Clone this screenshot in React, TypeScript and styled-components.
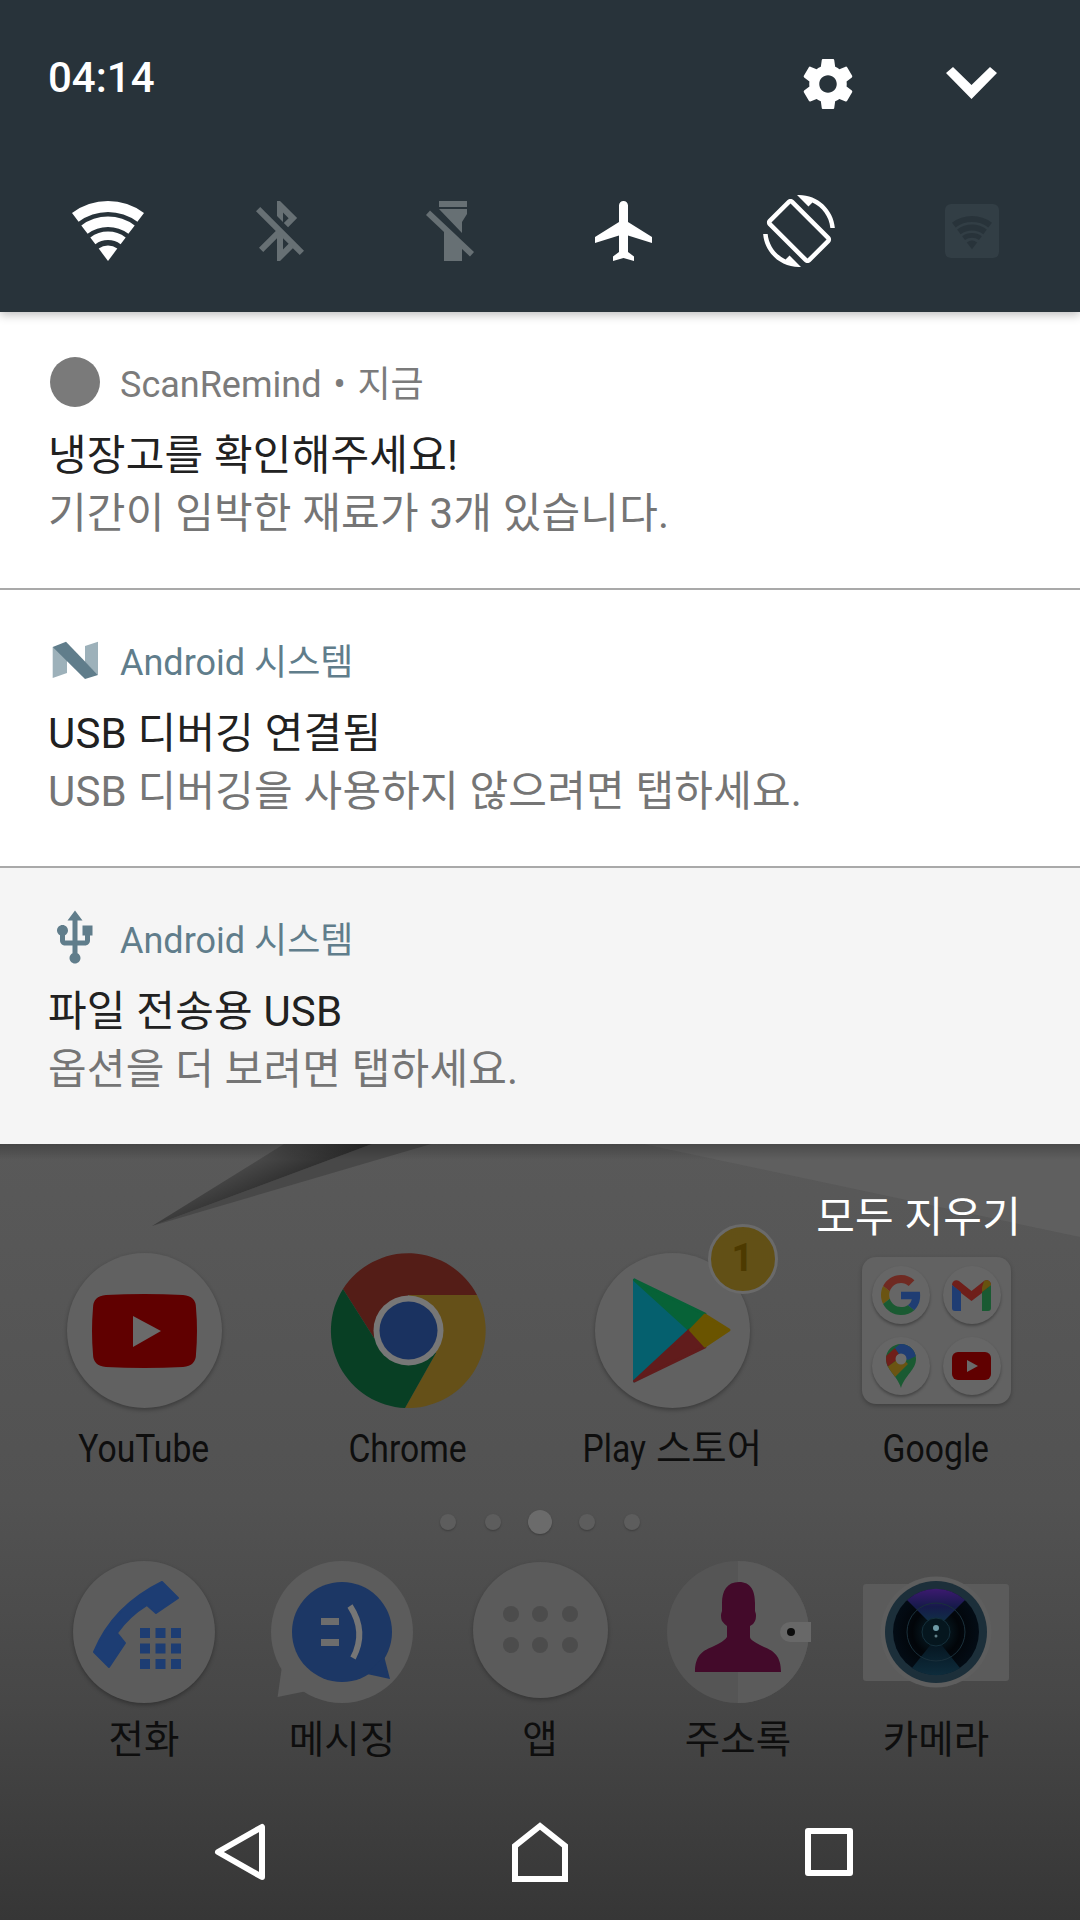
import styled, { createGlobalStyle } from "styled-components";

const GlobalStyle = createGlobalStyle`
    html, body {
        margin: 0;
        padding: 0;
        background: #363636;
    }
    * {
        box-sizing: border-box;
    }
    body {
        font-family: Roboto, "Noto Sans CJK KR", sans-serif;
    }
`

const Screen = styled.div`
    width: 1080px;
    height: 1920px;
    display: flex;
    flex-direction: column;
    overflow: hidden;
`

const Shade = styled.header`
    position: relative;
    z-index: 2;
    flex: 0 0 312px;
    background: #28333a;
    box-shadow: 0 3px 9px rgba(0, 0, 0, 0.25);
`

const ShadeTop = styled.div`
    display: flex;
    align-items: flex-start;
    height: 195px;
    padding: 54px 83px 0 48px;
`

const Clock = styled.div`
    margin-top: -1px;
    font-size: 42px;
    line-height: 49px;
    font-weight: 500;
    color: #fff;
`

const GearSlot = styled.svg`
    display: block;
    margin-left: auto;
`

const ChevronSlot = styled.svg`
    display: block;
    margin: 13px 0 0 88px;
`

const Tiles = styled.div`
    display: grid;
    grid-template-columns: 172px 172px 168px 178px 174px 172px;
    align-items: center;
    justify-items: center;
    height: 72px;
    margin-left: 22px;
`

const Notification = styled.article<{ $muted?: boolean }>`
    flex: 0 0 276px;
    padding: 40px 0 0 48px;
    background: ${(props) => (props.$muted ? "#f5f5f5" : "#fff")};
`

const Rule = styled.div`
    flex: 0 0 2px;
    background: #a9a9a9;
`

const NotifHead = styled.div`
    display: flex;
    align-items: center;
    height: 60px;
    margin-left: -3px;
    gap: 15px;
`

const AppIcon = styled.svg`
    display: block;
    flex: 0 0 60px;
`

const AppName = styled.div<{ $tint?: boolean }>`
    margin-top: 5px;
    font-size: 36px;
    line-height: 60px;
    color: ${(props) => (props.$tint ? "#607d8b" : "#7b7b7b")};
`

const NameDot = styled.span`
    margin: 0 3px;
`

const NotifTitle = styled.div`
    margin-top: 14px;
    font-size: 42px;
    line-height: 60px;
    letter-spacing: 0.2px;
    color: #212121;
`

const NotifBody = styled.div`
    margin-top: -2px;
    font-size: 42px;
    line-height: 60px;
    letter-spacing: 0.2px;
    color: #757575;
`

const Wallpaper = styled.section`
    position: relative;
    flex: 1;
    display: flex;
    flex-direction: column;
    background: linear-gradient(180deg, #595959 0, #525252 356px, #474747 556px, #363636 776px);

    &::after {
        content: "";
        position: absolute;
        top: 0;
        left: 0;
        right: 0;
        height: 16px;
        background: linear-gradient(180deg, rgba(0, 0, 0, 0.22), rgba(0, 0, 0, 0));
    }
`

const WallpaperLight = styled.div`
    position: absolute;
    top: 0;
    left: 0;
    width: 1080px;
    height: 93px;
    background: #5f5f5f;
    clip-path: polygon(643px 0, 1080px 0, 1080px 93px);
`

const ShardCore = styled.div`
    position: absolute;
    top: 0;
    left: 0;
    width: 440px;
    height: 84px;
    background: linear-gradient(155deg, #4a4a4a 46%, #2f2f2f 59%);
    clip-path: polygon(284px 0, 372px 0, 152px 82px);
`

const ShardEdge = styled.div`
    position: absolute;
    top: 0;
    left: 0;
    width: 440px;
    height: 84px;
    background: #484848;
    clip-path: polygon(372px 0, 431px 0, 152px 82px);
`

const ClearRow = styled.div`
    position: relative;
    z-index: 1;
    height: 109px;
    padding: 50px 59px 0 0;
    text-align: right;
    font-size: 42px;
    line-height: 48px;
    letter-spacing: 0.2px;
    color: #fff;
`

const AppGrid = styled.div`
    position: relative;
    z-index: 1;
    display: grid;
    grid-template-columns: repeat(4, 264px);
    margin-left: 12px;
`

const DockGrid = styled.div`
    position: relative;
    z-index: 1;
    display: grid;
    grid-template-columns: repeat(5, 198px);
    margin: 27px 0 0 45px;
`

const Launcher = styled.div`
    display: flex;
    flex-direction: column;
    align-items: center;
`

const LauncherIcon = styled.div<{ $size: number }>`
    position: relative;
    display: flex;
    align-items: center;
    justify-content: center;
    width: ${(props) => props.$size}px;
    height: ${(props) => props.$size}px;
`

const Disc = styled.div<{ $size: number; $dock?: boolean }>`
    display: flex;
    align-items: center;
    justify-content: center;
    width: ${(props) => props.$size}px;
    height: ${(props) => props.$size}px;
    border-radius: 50%;
    background: ${(props) => (props.$dock ? "#5c5c5c" : "#616161")};
    box-shadow: 0 2px 4px rgba(0, 0, 0, 0.3);
`

const IconArt = styled.svg`
    display: block;
    overflow: visible;
    flex: none;
`

const LauncherLabel = styled.div<{ $dock?: boolean }>`
    margin-top: ${(props) => (props.$dock ? "15px" : "19px")};
    font-size: 38.5px;
    line-height: 44px;
    color: #0e0e0e;
    white-space: nowrap;
`

const Narrow = styled.span`
    display: inline-block;
    transform: scaleX(0.875);
    margin: 0 -4px;
`

const Badge = styled.div`
    position: absolute;
    top: -29px;
    right: -28px;
    width: 70px;
    height: 70px;
    border-radius: 50%;
    border: 3px solid #6a6a6a;
    background: #625016;
    color: #4d3a00;
    font-size: 38px;
    font-weight: 700;
    line-height: 62px;
    text-align: center;
`

const Folder = styled.div`
    display: grid;
    grid-template-columns: 58px 58px;
    grid-auto-rows: 58px;
    gap: 13px;
    padding: 9px 10px;
    width: 149px;
    height: 147px;
    border-radius: 14px;
    background: #626262;
    box-shadow: 0 2px 4px rgba(0, 0, 0, 0.25);
`

const FolderDisc = styled.div`
    display: flex;
    align-items: center;
    justify-content: center;
    border-radius: 50%;
    background: #666;
    box-shadow: 0 2px 3px rgba(0, 0, 0, 0.3);
`

const Pager = styled.div`
    position: relative;
    z-index: 1;
    display: flex;
    align-items: center;
    justify-content: center;
    gap: 29px;
    height: 24px;
    margin-top: 39px;
`

const PagerDot = styled.div<{ $active?: boolean }>`
    width: ${(props) => (props.$active ? "24px" : "16px")};
    height: ${(props) => (props.$active ? "24px" : "16px")};
    margin: ${(props) => (props.$active ? "0 -2px" : "0")};
    border-radius: 50%;
    background: ${(props) => (props.$active ? "#6b6b6b" : "#5d5d5d")};
    box-shadow: 0 1px 2px rgba(0, 0, 0, 0.25);
`

const AppsDisc = styled.div`
    display: grid;
    grid-template-columns: repeat(3, 16px);
    grid-auto-rows: 16px;
    column-gap: 13.5px;
    row-gap: 15px;
    align-content: center;
    justify-content: center;
    width: 135px;
    height: 136px;
    margin-bottom: 5px;
    border-radius: 50%;
    background: #5b5b5b;
    box-shadow: 0 2px 4px rgba(0, 0, 0, 0.25);
`

const AppsDot = styled.div`
    border-radius: 50%;
    background: #4c4c4c;
`

const NavBar = styled.nav`
    position: relative;
    z-index: 1;
    display: grid;
    grid-template-columns: 240px 300px 289px;
    justify-items: end;
    align-items: center;
    height: 60px;
    margin-top: 60px;
`

const NavIcon = styled.svg<{ $shift: number }>`
    display: block;
    overflow: visible;
    margin-right: ${(props) => props.$shift}px;
`

function fan(inner: number, outer: number) {
    const pt = (r: number, side: number) => `${(36 + side * r * 0.6).toFixed(2)} ${(60 - r * 0.8).toFixed(2)}`
    if (inner === 0) return `M36 60L${pt(outer, -1)}A${outer} ${outer} 0 0 1 ${pt(outer, 1)}Z`
    return `M${pt(inner, -1)}L${pt(outer, -1)}A${outer} ${outer} 0 0 1 ${pt(outer, 1)}L${pt(inner, 1)}A${inner} ${inner} 0 0 0 ${pt(inner, -1)}Z`
}

const wifiBands = [fan(49, 60), fan(34, 44.5), fan(21, 29.5), fan(0, 15.5)]

function WifiIcon() {
    return (
        <IconArt width={72} height={60} viewBox="0 0 72 60">
            {wifiBands.map((d) => <path key={d} d={d} fill="#fff" />)}
        </IconArt>
    )
}

function BluetoothOffIcon() {
    return (
        <IconArt width={48} height={60} viewBox="4 2 16 20">
            <path fill="#677074" d="M13 5.83l1.88 1.88-1.6 1.6 1.41 1.41 3.02-3.02L12 2h-1v5.03l2 2v-3.2zM5.41 4L4 5.41 10.59 12 5 17.59 6.41 19 11 14.41V22h1l4.29-4.29 2.3 2.29L20 18.59 5.41 4zM13 18.17v-3.76l1.88 1.88L13 18.17z" />
        </IconArt>
    )
}

function FlashOffIcon() {
    return (
        <IconArt width={48} height={60} viewBox="0 0 48 60">
            <g fill="#677074">
                <rect x="13" y="0" width="28" height="6" />
                <polygon points="13,8 41,8 41,13 36,21 36,32" />
                <polygon points="18,27 36,44 36,60 18,60" />
                <polygon points="0,14 4,9.5 48,51 44,55.5" />
            </g>
        </IconArt>
    )
}

function PlaneIcon() {
    return (
        <IconArt width={57} height={60} viewBox="2 2 19 20">
            <path fill="#fff" d="M21 16v-2l-8-5V3.5c0-.83-.67-1.5-1.5-1.5S10 2.67 10 3.5V9l-8 5v2l8-2.5V19l-2 1.5V22l3.5-1 3.5 1v-1.5L13 19v-5.5l8 2.5z" />
        </IconArt>
    )
}

function RotateIcon() {
    return (
        <IconArt width={72} height={72} viewBox="0 0 24 24">
            <path fill="#fff" d="M16.48 2.52c3.27 1.55 5.61 4.72 5.97 8.48h1.5C23.44 4.84 18.29 0 12 0l-.66.03 3.81 3.81 1.33-1.32zm-6.25-.77c-.59-.59-1.54-.59-2.12 0L1.75 8.11c-.59.59-.59 1.54 0 2.12l12.02 12.02c.59.59 1.54.59 2.12 0l6.36-6.36c.59-.59.59-1.54 0-2.12L10.23 1.75zm4.6 19.44L2.81 9.17l6.36-6.36 12.02 12.02-6.36 6.36zm-7.31.29C4.25 19.94 1.91 16.76 1.55 13H.05C.56 19.16 5.71 24 12 24l.66-.03-3.81-3.81-1.33 1.32z" />
        </IconArt>
    )
}

function DataIcon() {
    return (
        <IconArt width={54} height={54} viewBox="0 0 54 54">
            <rect width="54" height="54" rx="6" fill="#323e45" />
            <g transform="translate(7 12) scale(0.555)">
                {wifiBands.map((d) => <path key={d} d={d} fill="#28333a" />)}
            </g>
        </IconArt>
    )
}

function NougatIcon() {
    return (
        <AppIcon width={60} height={60} viewBox="0 0 60 60">
            <g transform="translate(7 11)">
                <polygon points="0.7,6 15,12 15,32 0.7,37" fill="#9db1ba" />
                <polygon points="46,0.7 33,5 33,21 46,34" fill="#9db1ba" />
                <polygon points="0.7,6 14,0.7 46,34 33,38" fill="#607d8b" />
            </g>
        </AppIcon>
    )
}

function UsbIcon() {
    return (
        <AppIcon width={60} height={60} viewBox="0 0 24 24">
            <path fill="#607d8b" d="M15 7v4h1v2h-3V5h2l-3-4-3 4h2v8H8v-2.07c.7-.37 1.2-1.08 1.2-1.93 0-1.21-.99-2.2-2.2-2.2-1.21 0-2.2.99-2.2 2.2 0 .85.5 1.56 1.2 1.93V13c0 1.11.89 2 2 2h3v3.05c-.71.37-1.2 1.1-1.2 1.95 0 1.22.99 2.2 2.2 2.2 1.21 0 2.2-.98 2.2-2.2 0-.85-.49-1.58-1.2-1.95V15h3c1.11 0 2-.89 2-2v-2h1V7h-4z" />
        </AppIcon>
    )
}

function YoutubeArt() {
    return (
        <IconArt width={105} height={74} viewBox="0 0 105 74">
            <path d="M14 1Q52 -1 91 1Q104 2 104 14Q106 37 104 60Q104 72 91 73Q52 75 14 73Q1 72 1 60Q-1 37 1 14Q1 2 14 1Z" fill="#600000" />
            <polygon points="41,22 41,53 69,37" fill="#6a6a6a" />
        </IconArt>
    )
}

function ChromeArt() {
    return (
        <IconArt width={155} height={155} viewBox="0 0 155 155">
            <path d="M12 36A77.5 77.5 0 0 1 146 42H77.5L43 85Z" fill="#541d17" />
            <path d="M146 42A77.5 77.5 0 0 1 74 155L105 100L77.5 42Z" fill="#655018" />
            <path d="M74 155A77.5 77.5 0 0 1 12 36L43 85L105 100Z" fill="#083f24" />
            <circle cx="77.5" cy="77.5" r="35" fill="#777" />
            <circle cx="77.5" cy="77.5" r="29" fill="#1a3260" />
        </IconArt>
    )
}

function PlayArt() {
    return (
        <IconArt width={155} height={155} viewBox="0 0 155 155">
            <g strokeWidth="3" strokeLinejoin="round">
                <polygon points="39.5,27 94.5,77 39.5,128" fill="#05606e" stroke="#05606e" />
                <polygon points="39.5,27 110,61 94.5,77" fill="#076237" stroke="#076237" />
                <polygon points="39.5,128 94.5,77 110,94" fill="#611c1c" stroke="#611c1c" />
                <polygon points="110,62 134,77 110,93 95.5,77" fill="#6a5400" stroke="#6a5400" />
            </g>
        </IconArt>
    )
}

function MiniGoogle() {
    return (
        <IconArt width={40} height={40} viewBox="0 0 48 48">
            <path fill="#6f2a22" d="M24 9.5c3.54 0 6.71 1.22 9.21 3.6l6.85-6.85C35.9 2.38 30.47 0 24 0 14.62 0 6.51 5.38 2.56 13.22l7.98 6.19C12.43 13.72 17.74 9.5 24 9.5z" />
            <path fill="#1f3d73" d="M46.98 24.55c0-1.57-.15-3.09-.38-4.55H24v9.02h12.94c-.58 2.96-2.26 5.48-4.78 7.18l7.73 6c4.51-4.18 7.09-10.36 7.09-17.65z" />
            <path fill="#6b5412" d="M10.53 28.59c-.48-1.45-.76-2.99-.76-4.59s.27-3.14.76-4.59l-7.98-6.19C.92 16.46 0 20.12 0 24c0 3.88.92 7.54 2.56 10.78l7.97-6.19z" />
            <path fill="#1a5a32" d="M24 48c6.48 0 11.93-2.13 15.89-5.81l-7.73-6c-2.15 1.45-4.92 2.3-8.16 2.3-6.26 0-11.57-4.22-13.47-9.91l-7.98 6.19C6.51 42.62 14.62 48 24 48z" />
        </IconArt>
    )
}

function MiniGmail() {
    return (
        <IconArt width={39} height={31} viewBox="0 0 39 31">
            <path d="M0 5C0 1 4 -1 7 1L19.5 11L32 1C35 -1 39 1 39 5L30 13L19.5 21L9 13Z" fill="#6f1f1a" />
            <path d="M0 5L9 12V31H3C1 31 0 30 0 28Z" fill="#1f3d73" />
            <path d="M39 5L30 12V31H36C38 31 39 30 39 28Z" fill="#1a5a32" />
            <path d="M30 7.5L32 1C35 -1 39 1 39 5L30 12Z" fill="#66520f" />
        </IconArt>
    )
}

function MiniMaps() {
    return (
        <IconArt width={30} height={44} viewBox="0 0 30 44">
            <defs>
                <clipPath id="pin">
                    <path d="M15 0C6.7 0 0 6.5 0 14.8C0 26 11 31 15 44C19 31 30 26 30 14.8C30 6.5 23.3 0 15 0Z" />
                </clipPath>
            </defs>
            <g clipPath="url(#pin)">
                <rect width="30" height="44" fill="#1a5a32" />
                <polygon points="0,12 9,4 15,13 0,24" fill="#6f1f1a" />
                <polygon points="0,24 15,13 22,20 6,36 0,30" fill="#6b5412" />
                <polygon points="9,4 14,0 30,0 30,12 22,16 15,13" fill="#1f3d73" />
            </g>
            <circle cx="15" cy="15" r="5.5" fill="#6c6c6c" />
        </IconArt>
    )
}

function MiniYoutube() {
    return (
        <IconArt width={39} height={28} viewBox="0 0 39 28">
            <rect width="39" height="28" rx="6" fill="#600000" />
            <polygon points="15,8 15,20 26,14" fill="#6a6a6a" />
        </IconArt>
    )
}

function PhoneArt() {
    return (
        <IconArt width={142} height={142} viewBox="0 0 142 142">
            <path d="M89 21L105 37L83 52L74 44Q56 55 44 72L52 82L36 106L21 91Q40 45 89 21Z" fill="#1d3d73" stroke="#1d3d73" strokeWidth="2" strokeLinejoin="round" />
            <g fill="#1d3d73">
                {[67, 82.5, 98].map((y) => [67, 82.5, 98].map((x) => <rect key={`${x}-${y}`} x={x} y={y} width="10" height="10" />))}
            </g>
        </IconArt>
    )
}

function MessagingArt() {
    return (
        <IconArt width={142} height={142} viewBox="0 0 142 142">
            <circle cx="71" cy="71" r="71" fill="#5c5c5c" />
            <polygon points="11,105 6.6,136 36,130" fill="#5c5c5c" />
            <circle cx="71" cy="71" r="50" fill="#1c3765" />
            <polygon points="113,95 119,118 96,113" fill="#1c3765" />
            <rect x="50" y="57" width="18" height="7" fill="#6d6d6d" />
            <rect x="50" y="78" width="18" height="7" fill="#6d6d6d" />
            <path d="M79 45Q96 71 82 97" fill="none" stroke="#767676" strokeWidth="6" />
        </IconArt>
    )
}

function ContactsArt() {
    return (
        <IconArt width={142} height={142} viewBox="0 0 142 142">
            <circle cx="71" cy="71" r="71" fill="#555" />
            <path d="M71 0A71 71 0 0 1 71 142Z" fill="#5b5b5b" />
            <path d="M72 21C60 21 55 30 55 42V50Q53 55 55 60Q58 64 60 65V76Q58 80 45 86C35 90 28 95 28 111H114C114 95 107 90 97 86C85 80 83 78 83 76V65Q87 63 88 60Q90 55 88 50V42C88 30 84 21 72 21Z" fill="#430a2a" />
            <path d="M123 61H144V81H123A10 10 0 0 1 123 61Z" fill="#686868" />
            <circle cx="124" cy="71" r="4" fill="#0c0c0c" />
        </IconArt>
    )
}

function CameraArt() {
    return (
        <IconArt width={148} height={112} viewBox="0 0 148 112">
            <defs>
                <radialGradient id="lens" cx="50%" cy="50%" r="50%">
                    <stop offset="0" stopColor="#0a2530" />
                    <stop offset="0.55" stopColor="#020509" />
                    <stop offset="1" stopColor="#030c15" />
                </radialGradient>
                <linearGradient id="wedgeTop" x1="0" y1="0" x2="0" y2="1">
                    <stop offset="0" stopColor="#3c1a70" />
                    <stop offset="0.45" stopColor="#161a4a" />
                    <stop offset="1" stopColor="#0d3a44" />
                </linearGradient>
                <linearGradient id="wedgeLow" x1="0" y1="0" x2="0" y2="1">
                    <stop offset="0" stopColor="#04121c" />
                    <stop offset="1" stopColor="#0e2c3c" />
                </linearGradient>
            </defs>
            <rect x="1" y="8" width="146" height="97" rx="3" fill="#5b5b5b" />
            <circle cx="74" cy="56" r="55.5" fill="#5e5e5e" />
            <circle cx="74" cy="56" r="51" fill="#1c2f3a" />
            <circle cx="74" cy="56" r="43" fill="url(#lens)" />
            <path d="M45 24A43 43 0 0 1 103 24L74 53Z" fill="url(#wedgeTop)" />
            <path d="M50 92A43 43 0 0 0 98 92L74 62Z" fill="url(#wedgeLow)" />
            <circle cx="74" cy="56" r="29" fill="none" stroke="#1a303b" strokeWidth="1" />
            <circle cx="74" cy="56" r="14" fill="#05161e" stroke="#15303c" strokeWidth="1" />
            <circle cx="74" cy="52" r="3" fill="#6d9aa6" />
            <circle cx="74" cy="60" r="1.5" fill="#5f7f88" />
        </IconArt>
    )
}

export default function App() {
    return (
        <Screen>
            <GlobalStyle />
            <Shade>
                <ShadeTop>
                    <Clock>04:14</Clock>
                    <GearSlot width={60} height={60} viewBox="0 0 24 24">
                        <path fill="#fff" d="M19.43 12.98c.04-.32.07-.64.07-.98s-.03-.66-.07-.98l2.11-1.65c.19-.15.24-.42.12-.64l-2-3.46c-.12-.22-.39-.3-.61-.22l-2.49 1c-.52-.4-1.08-.73-1.69-.98l-.38-2.65C14.46 2.18 14.25 2 14 2h-4c-.25 0-.46.18-.49.42l-.38 2.65c-.61.25-1.17.59-1.69.98l-2.49-1c-.23-.09-.49 0-.61.22l-2 3.46c-.13.22-.07.49.12.64l2.11 1.65c-.04.32-.07.65-.07.98s.03.66.07.98l-2.11 1.65c-.19.15-.24.42-.12.64l2 3.46c.12.22.39.3.61.22l2.49-1c.52.4 1.08.73 1.69.98l.38 2.65c.03.24.24.42.49.42h4c.25 0 .46-.18.49-.42l.38-2.65c.61-.25 1.17-.59 1.69-.98l2.49 1c.23.09.49 0 .61-.22l2-3.46c.12-.22.07-.49-.12-.64l-2.11-1.65zM12 15.5c-1.93 0-3.5-1.57-3.5-3.5s1.57-3.5 3.5-3.5 3.5 1.57 3.5 3.5-1.57 3.5-3.5 3.5z" />
                    </GearSlot>
                    <ChevronSlot width={51} height={32} viewBox="0 0 51 32">
                        <polygon fill="#fff" points="0,6 7,0 25.5,18 44,0 51,6 25.5,32" />
                    </ChevronSlot>
                </ShadeTop>
                <Tiles>
                    <WifiIcon />
                    <BluetoothOffIcon />
                    <FlashOffIcon />
                    <PlaneIcon />
                    <RotateIcon />
                    <DataIcon />
                </Tiles>
            </Shade>

            <Notification>
                <NotifHead>
                    <AppIcon width={60} height={60} viewBox="0 0 60 60">
                        <circle cx="30" cy="30" r="25" fill="#7a7a7a" />
                    </AppIcon>
                    <AppName>ScanRemind<NameDot> • </NameDot>지금</AppName>
                </NotifHead>
                <NotifTitle>냉장고를 확인해주세요!</NotifTitle>
                <NotifBody>기간이 임박한 재료가 3개 있습니다.</NotifBody>
            </Notification>
            <Rule />
            <Notification>
                <NotifHead>
                    <NougatIcon />
                    <AppName $tint>Android 시스템</AppName>
                </NotifHead>
                <NotifTitle>USB 디버깅 연결됨</NotifTitle>
                <NotifBody>USB 디버깅을 사용하지 않으려면 탭하세요.</NotifBody>
            </Notification>
            <Rule />
            <Notification $muted>
                <NotifHead>
                    <UsbIcon />
                    <AppName $tint>Android 시스템</AppName>
                </NotifHead>
                <NotifTitle>파일 전송용 USB</NotifTitle>
                <NotifBody>옵션을 더 보려면 탭하세요.</NotifBody>
            </Notification>

            <Wallpaper>
                <WallpaperLight />
                <ShardEdge />
                <ShardCore />
                <ClearRow>모두 지우기</ClearRow>
                <AppGrid>
                    <Launcher>
                        <LauncherIcon $size={155}>
                            <Disc $size={155}><YoutubeArt /></Disc>
                        </LauncherIcon>
                        <LauncherLabel><Narrow>YouTube</Narrow></LauncherLabel>
                    </Launcher>
                    <Launcher>
                        <LauncherIcon $size={155}><ChromeArt /></LauncherIcon>
                        <LauncherLabel><Narrow>Chrome</Narrow></LauncherLabel>
                    </Launcher>
                    <Launcher>
                        <LauncherIcon $size={155}>
                            <Disc $size={155}><PlayArt /></Disc>
                            <Badge>1</Badge>
                        </LauncherIcon>
                        <LauncherLabel><Narrow>Play</Narrow> 스토어</LauncherLabel>
                    </Launcher>
                    <Launcher>
                        <LauncherIcon $size={155}>
                            <Folder>
                                <FolderDisc><MiniGoogle /></FolderDisc>
                                <FolderDisc><MiniGmail /></FolderDisc>
                                <FolderDisc><MiniMaps /></FolderDisc>
                                <FolderDisc><MiniYoutube /></FolderDisc>
                            </Folder>
                        </LauncherIcon>
                        <LauncherLabel><Narrow>Google</Narrow></LauncherLabel>
                    </Launcher>
                </AppGrid>
                <Pager>
                    <PagerDot />
                    <PagerDot />
                    <PagerDot $active />
                    <PagerDot />
                    <PagerDot />
                </Pager>
                <DockGrid>
                    <Launcher>
                        <LauncherIcon $size={142}>
                            <Disc $size={142} $dock><PhoneArt /></Disc>
                        </LauncherIcon>
                        <LauncherLabel $dock>전화</LauncherLabel>
                    </Launcher>
                    <Launcher>
                        <LauncherIcon $size={142}><MessagingArt /></LauncherIcon>
                        <LauncherLabel $dock>메시징</LauncherLabel>
                    </Launcher>
                    <Launcher>
                        <LauncherIcon $size={142}>
                            <AppsDisc>
                                {[0, 1, 2, 3, 4, 5].map((n) => <AppsDot key={n} />)}
                            </AppsDisc>
                        </LauncherIcon>
                        <LauncherLabel $dock>앱</LauncherLabel>
                    </Launcher>
                    <Launcher>
                        <LauncherIcon $size={142}><ContactsArt /></LauncherIcon>
                        <LauncherLabel $dock>주소록</LauncherLabel>
                    </Launcher>
                    <Launcher>
                        <LauncherIcon $size={142}><CameraArt /></LauncherIcon>
                        <LauncherLabel $dock>카메라</LauncherLabel>
                    </Launcher>
                </DockGrid>
                <NavBar>
                    <NavIcon $shift={-25} width={50} height={56} viewBox="0 0 50 56">
                        <path d="M47 3V53L3 28Z" fill="none" stroke="#fff" strokeWidth="6" strokeLinejoin="round" />
                    </NavIcon>
                    <NavIcon $shift={-28} width={56} height={59} viewBox="0 0 56 59">
                        <path d="M3 56V23L28 3L53 23V56Z" fill="none" stroke="#fff" strokeWidth="6" />
                    </NavIcon>
                    <NavIcon $shift={-24} width={48} height={48} viewBox="0 0 48 48">
                        <rect x="3" y="3" width="42" height="42" fill="none" stroke="#fff" strokeWidth="6" strokeLinejoin="round" />
                    </NavIcon>
                </NavBar>
            </Wallpaper>
        </Screen>
    )
}
